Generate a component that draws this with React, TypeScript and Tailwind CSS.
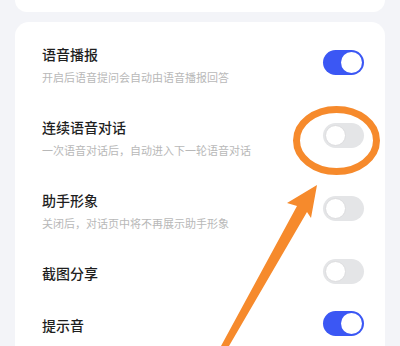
import React from "react";

type Item = { title: string; sub?: string; on: boolean };

const items: Item[] = [
  { title: "语音播报", sub: "开启后语音提问会自动由语音播报回答", on: true },
  { title: "连续语音对话", sub: "一次语音对话后，自动进入下一轮语音对话", on: false },
  { title: "助手形象", sub: "关闭后，对话页中将不再展示助手形象", on: false },
  { title: "截图分享", on: false },
  { title: "提示音", on: true },
];

function Toggle({ on }: { on: boolean }) {
  return on ? (
    <div className="w-[41px] h-[25px] rounded-full bg-[#3b57f4] flex items-center justify-end pr-[2px] mt-[-6px] mb-[-2px] shrink-0">
      <div className="w-[21px] h-[21px] rounded-full bg-white" />
    </div>
  ) : (
    <div className="w-[41px] h-[25px] rounded-full bg-[#e4e5e7] flex items-center justify-start pl-[2px] mt-[-6px] mb-[-2px] shrink-0">
      <div className="w-[21px] h-[21px] rounded-full bg-white border border-[#dcdcde]" />
    </div>
  );
}

export default function App() {
  return (
    <div
      className="relative w-[400px] h-[346px] overflow-hidden bg-[#f3f4f8]"
      style={{ fontFamily: '"Noto Sans CJK SC", "Noto Sans", sans-serif' }}
    >
      <div className="mx-[15px] h-[12px] bg-white rounded-b-[14px]" />
      <div className="mx-[15px] mt-[10px] bg-white rounded-t-[14px] pt-[6px] pl-[27px] pr-[21px]">
        {items.map((it) => (
          <div key={it.title} className="flex items-center justify-between py-[16px]">
            <div className="flex flex-col">
              <div className="text-[14px] leading-[20px] font-medium text-[#1f1f1f]">{it.title}</div>
              {it.sub && (
                <div className="text-[11px] leading-[16px] mt-[5px] text-[#b8b8b8]">{it.sub}</div>
              )}
            </div>
            <Toggle on={it.on} />
          </div>
        ))}
      </div>
      <svg
        className="absolute left-0 top-0 pointer-events-none"
        width="400"
        height="346"
        viewBox="0 0 400 346"
      >
        <ellipse cx="336.5" cy="140.5" rx="40" ry="31" fill="none" stroke="#f68a2c" strokeWidth="7" />
        <polygon
          points="287,203 317,185 311,218 307,212 229,346 221,346 297,206"
          fill="#f68a2c"
        />
      </svg>
    </div>
  );
}
